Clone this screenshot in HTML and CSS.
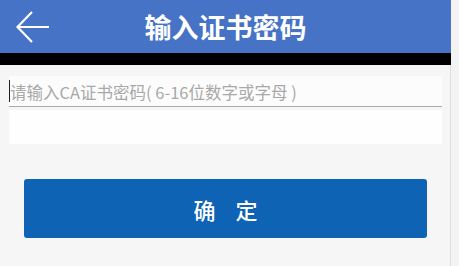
FILE: index.html
```html
<!DOCTYPE html>
<html lang="zh">
<head>
<meta charset="utf-8">
<link rel="stylesheet" href="styles.css">
</head>
<body>
<div class="screen">
  <div class="main">
    <header class="topbar">
      <span class="back">
        <svg width="34" height="32" viewBox="0 0 34 32"><path d="M33 16H2M16 1L1.5 16L16 31" fill="none" stroke="#fff" stroke-width="2.2"/></svg>
      </span>
      <h1 class="title">输入证书密码</h1>
    </header>
    <div class="blackbar"></div>
    <div class="form">
      <div class="field first"><span class="caret"></span><span class="placeholder">请输入CA证书密码( 6-16位数字或字母 )</span></div>
      <div class="field second"></div>
      <button class="confirm"><span>确</span><span>定</span></button>
    </div>
  </div>
  <div class="edge"></div>
</div>
</body>
</html>
```
FILE: styles.css
```css
html, body {
  margin: 0;
  padding: 0;
}
body {
  width: 459px;
  height: 266px;
  overflow: hidden;
  background: #f2f3f2;
  font-family: "Noto Sans CJK SC", "Noto Sans", sans-serif;
}
.screen {
  display: flex;
  height: 266px;
}
.main {
  width: 450px;
  background: #f5f6f5;
  border-right: 1px solid #dcdddc;
  display: flex;
  flex-direction: column;
}
.edge {
  flex: 1;
  background: #f2f3f2;
}
.topbar {
  height: 53px;
  background: #4673c6;
  position: relative;
  display: flex;
  align-items: center;
  justify-content: center;
  margin-right: -1px;
}
.back {
  position: absolute;
  left: 16px;
  top: 11px;
  display: flex;
}
.title {
  margin: 0;
  color: #fff;
  font-size: 27px;
  font-weight: 700;
  line-height: 1;
}
.blackbar {
  height: 12px;
  background: #000;
  margin-right: -1px;
}
.form {
  padding: 11px 8px 0 9px;
  display: flex;
  flex-direction: column;
}
.field {
  background: #fcfcfc;
  box-sizing: border-box;
}
.field.first {
  height: 31px;
  border-bottom: 1px solid #a9aaa9;
  display: flex;
  align-items: center;
}
.caret {
  width: 1px;
  height: 22px;
  background: #222;
}
.placeholder {
  color: #a8a8a8;
  font-size: 16.5px;
  line-height: 1;
  margin-top: 2px;
  white-space: pre;
}
.field.second {
  height: 34px;
  margin-top: 3px;
  background: #fefefe;
}
.confirm {
  margin: 35px 15px 0 15px;
  height: 59px;
  border: none;
  border-radius: 3px;
  background: #0e63b4;
  color: #fff;
  font-family: "Noto Sans CJK SC", sans-serif;
  font-size: 22px;
  font-weight: 500;
  padding: 0;
  display: flex;
  align-items: center;
  justify-content: center;
  gap: 20px;
}
```
